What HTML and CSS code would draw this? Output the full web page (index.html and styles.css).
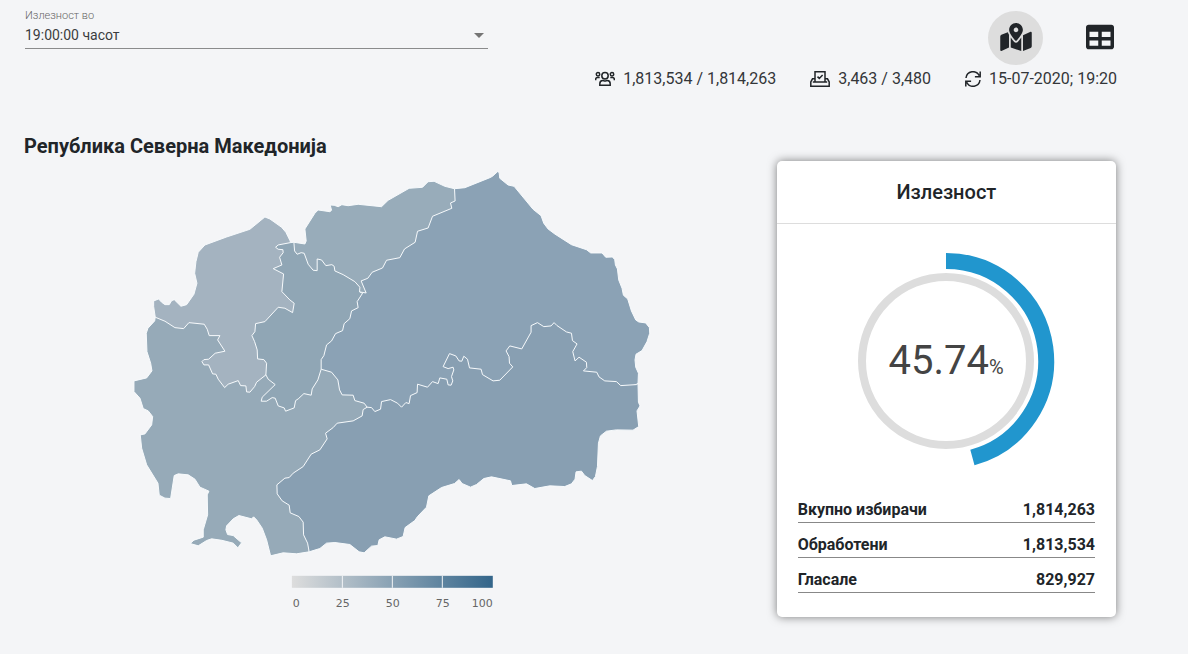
FILE: index.html
```html
<!DOCTYPE html>
<html lang="mk">
<head>
  <meta charset="UTF-8">
  <meta name="viewport" content="width=device-width, initial-scale=1.0">
  <title>Излезност</title>
  <link rel="stylesheet" href="styles.css">
</head>
<body>

  <div class="container">
    <header class="topbar">
      <div class="field">
        <label for="turnoutTime">Излезност во</label>
        <div class="select-box">
          <select id="turnoutTime">
            <option>19:00:00 часот</option>
          </select>
          <span class="arrow"></span>
        </div>
      </div>

      <div class="summary">
        <div class="views">
          <button type="button" class="view-button active" aria-label="Мапа">
            <svg width="32" height="28" viewBox="0 0 576 512"><path d="M288 0c-69.59 0-126 56.41-126 126 0 56.26 82.35 158.8 113.9 196.02 6.39 7.54 17.82 7.54 24.2 0C331.65 284.8 414 182.26 414 126 414 56.41 357.59 0 288 0zm0 168c-23.2 0-42-18.8-42-42s18.8-42 42-42 42 18.8 42 42-18.8 42-42 42zM20.12 215.95A32.006 32.006 0 0 0 0 245.66v250.32c0 11.32 11.43 19.06 21.94 14.86L160 448V214.92c-8.84-15.98-16.07-31.54-21.25-46.42L20.12 215.95zM288 359.67c-14.07 0-27.38-6.18-36.51-16.96-19.66-23.2-40.57-49.62-59.49-76.72v182l192 64V266c-18.92 27.09-39.82 53.52-59.49 76.72-9.13 10.77-22.44 16.95-36.51 16.95zm266.06-198.51L416 224v288l139.88-55.95A31.996 31.996 0 0 0 576 426.34V176.02c0-11.32-11.43-19.06-21.94-14.86z"/></svg>
          </button>
          <button type="button" class="view-button" aria-label="Табела">
            <svg width="28" height="28" viewBox="0 0 512 512"><path d="M464 32H48C21.49 32 0 53.49 0 80v352c0 26.51 21.49 48 48 48h416c26.51 0 48-21.49 48-48V80c0-26.51-21.49-48-48-48zM224 416H64v-96h160v96zm0-160H64v-96h160v96zm224 160H288v-96h160v96zm0-160H288v-96h160v96z"/></svg>
          </button>
        </div>
        <div class="stats">
          <span class="stat">
            <svg class="line-icon" width="20" height="16" viewBox="0 0 20 16">
              <circle cx="10" cy="4.7" r="3.2"/>
              <circle cx="3" cy="3.2" r="1.7"/>
              <circle cx="17" cy="3.2" r="1.7"/>
              <path d="M4.8 14.3v-1.5c0-2 1.3-3.3 3-3.3.8 0 1.2.4 2.2.4s1.4-.4 2.2-.4c1.7 0 3 1.3 3 3.3v1.5zM.7 9.3V8.2c0-1 .8-1.7 1.8-1.7h2.2M19.3 9.3V8.2c0-1-.8-1.7-1.8-1.7h-2.2"/>
            </svg>
            1,813,534 / 1,814,263
          </span>
          <span class="stat">
            <svg class="line-icon" width="20" height="16" viewBox="0 0 20 16">
              <path d="M5 11V.8h10V11M2.8 11h14.4M5 7.8H2.5L.8 11v4.2h18.4V11l-1.7-3.2H15M7.5 5.6l1.8 1.8 3.3-3.5"/>
            </svg>
            3,463 / 3,480
          </span>
          <span class="stat">
            <svg class="line-icon" width="16" height="16" viewBox="0 0 16 16">
              <path d="M1 7A7 7 0 0 1 14.3 4.8M15 9A7 7 0 0 1 1.7 11.2M15.2.5v5.3H9.9M.8 15.5v-5.3h5.3"/>
            </svg>
            15-07-2020; 19:20
          </span>
        </div>
      </div>
    </header>

    <main class="content">
      <section class="map-panel">
        <h1>Република Северна Македонија</h1>
        <svg class="map" viewBox="24 168 736 446" role="img" aria-label="Мапа на излезност">
          <defs>
            <linearGradient id="scale">
              <stop offset="0" stop-color="#dddddd"/>
              <stop offset="1" stop-color="#33658a"/>
            </linearGradient>
          </defs>

          <!-- regions overlap on purpose, every shared border is drawn by the later one -->
          <g class="regions">
            <path fill="#8ba2b5" d="M454.7 188.7L465 187.7 490 177.7 492.7 176.3 497.7 171.7 499.3 172.3 500 178.3 508.3 185 514.3 186.3 533.3 209.3 541.3 215.7 544 223.3 548.3 229 555 234 571.7 244.7 586.7 249.7 591 253 602.3 253 606 257.3 612.7 257 615 259.7 615.7 265 617.7 269 619 280 622.3 288.3 623.7 295.3 628 299 631.7 311 636 320 639 322 646 323 649.7 327.7 650 333.3 647.3 341.7 642.3 350.7 636.3 354.3 635.3 360 636 367.3 638.7 373.3 638.3 383.7 600 400 450 420 370 420 330 400 305 360 335 300 355 290 375 262 410 225 445 195Z"/>
            <path fill="#98acba" d="M294 242.3L305 244 306.3 241 305 229 315 213.3 318.3 210 330 211.7 331.7 210.3 330.3 205 334.3 205.3 338.3 206.7 342 204.7 348.3 205.7 358.3 204.3 381.7 206.7 388.3 200.3 409.3 188.3 422.7 187.3 428.3 181.7 434.3 181.3 445 186.3 454.7 188.7 455.3 201 450.7 203 452 208.3 432.7 216.3 428.3 228 417.7 231.3 415.3 242.3 404.7 249 400 257.7 386.7 260.3 382.7 268 372.3 272.3 368 278.3 361.3 281 366.3 293 359.7 292 330 290 300 280 290 255Z"/>
            <path fill="#96aab8" d="M309.3 552L296.7 554 283.3 553 270.7 556 266.7 540 262.3 528.3 256.7 520 253.7 517 251.7 519 239 515.7 233.3 519 226.7 526 226 530 227.7 534.7 233.3 535.7 241.7 543 238 548 233.3 543.3 222 540.5 211.7 539 206.7 540.7 198.3 546 190.3 543.7 194 540.3 203.3 537.3 203.3 530 207.7 515 207.3 495 209 491.3 200 487.3 195 479.3 188.3 475 178.3 474 174.3 475.7 170.7 498.7 165 498.3 159.3 495.3 158 483.3 146.7 465 141.7 448.3 140.3 435 145 434 151.7 425 152.7 416.7 148.3 411 143.3 408.7 140 398.3 134 391.7 134 381 146.7 378 152 371 150.7 363.3 147 351.7 146.3 333.3 148 328.3 154.7 321 155.3 317.3 200 310 240 340 300 375 321.3 369.3 331.7 372.3 338 380 339.7 390 342.3 395 353.3 395.3 355 400.7 364.3 403.3 367.3 407.3 380 420 330 470 310 530Z"/>
            <path fill="#a4b3c0" d="M155.3 317.3L153.7 306.7 153.7 301 158.7 299 161.7 302.3 165 304.7 169.3 304.7 171.7 300.7 174.3 299.7 181 306.3 186.7 304.7 194 294.3 197 283.3 194.7 273.3 196 261.7 198.3 252.3 205 245 226.7 237 250 229.3 265 217 270 219 281.7 227.3 286 232.3 290.3 241 300 300 275 360 266 375 256.7 382.3 254.7 386.7 250 392.3 246.7 392 246 386 240.7 385.7 238.3 380.7 228.3 384.3 224.7 387.7 218.3 379.3 216 374.3 212.7 374 208.7 365 204 365 202 361.7 204 359.7 208.7 359.3 215.3 353.3 225 351.3 217.7 340 220 335.7 209.3 335.7 207.3 329.3 204.3 324.3 189 322.7 183.7 328.7 175 327.7 165 321.3Z"/>
            <path fill="#90a6b5" d="M290.3 242.7L278.3 245 275.7 247.3 278.3 249.3 283 249.7 283.3 252.7 279.7 257.3 282 265 273.3 268.7 283.7 274 282 291.7 290 300 294.3 303.3 292.7 312.7 285 308.3 278.3 307.3 265 321.7 255.7 323.7 255 331.7 252 335.7 254.7 341.7 257.3 350 257.7 359 264 359.7 266.7 363.3 266 375 268.3 379.3 275.3 384.7 262.3 397.3 261.3 401.3 266.7 401.3 272.3 397.7 275.3 398.3 278.3 406 284.3 408 285.7 411.3 294.3 408 295.7 400.7 298.3 399 304 393.7 311.3 395.3 312.3 389 318 380 321.3 369.3 321.3 359.7 324 355.7 326.7 345 331.7 341 335.7 333.7 342.7 330.7 344.3 323.7 350 318.7 351.7 311 358.3 307.7 357.3 301.7 362.7 293.3 359.7 292 360 287.3 355 281.7 343.3 274.7 335 271 334.3 266.3 332 264.7 326 265.7 321.7 260 317.3 259 317.3 270.7 313.3 270.3 308.3 264.3 304.3 253.3 301.3 252.7 297.3 254.3 294.7 251 294 242.3Z"/>
            <path fill="#889fb2" d="M309.3 552L320 548.7 326.7 543.3 335 542.7 350 544.7 359.3 552 364.3 553 371.7 546.3 378 545.7 379.3 540 385 537 396.7 539.3 403.3 536.7 405.3 527.7 415 520.7 417.7 516.7 426.7 507.3 429 496 441.7 487.7 454.7 483.7 459.3 479.7 462.3 483.7 470.7 487.3 476.7 484.7 484 478.7 491.7 477 510.7 481 512 485.7 526.7 484 535 488.7 550 486 565 486.7 571.7 484 575.3 479.3 576.3 472 581.7 471.3 585 475.7 592.7 480.7 595.7 476.7 597.7 466.7 598.7 443.3 600.7 436 606.7 431.3 616.7 430 633.3 430.3 639 426.7 637.3 411 640.3 406 638.7 402.3 638.3 383.7 636.7 384.7 621 385.7 616.7 381.7 605 381 599.3 377 597 372.3 583.7 371 587 367.7 586.7 362.3 579.3 357.3 575.3 361 573 351.7 577.3 344 572.7 340.7 571.7 333.3 566.7 332 557.3 325.7 554.3 322.7 551.3 326 544 326.7 537.7 322.7 531.3 325.7 531.3 332.3 522 349 510 346 506.3 351 509.3 356.7 509.7 363.3 513 367 500 380.3 493.3 381 482.7 374.7 481.3 369.3 469.7 368 467.7 359.3 464 356.3 462 361.3 459.3 361 456 356 449.7 353.7 443.3 366.7 448.3 368.7 453.3 367.3 454 370 451.7 376.7 453 381 451.3 385.3 448.3 385 447 379.3 440 378 438.3 383.7 432.7 381.7 427.7 387.3 417.7 384.3 417.3 392.7 410.7 395.7 409.3 403.7 406 402.7 401.7 407.3 397.7 403.3 390.7 399.7 381.7 401.7 380.7 409.3 375 411.7 371.7 407.7 367.3 407.3 363.3 409.7 362.3 416 353.3 421 337.3 423.3 333.3 427.7 325.7 433.3 327.3 439 320 450 311.3 454.3 303.3 466.7 293.3 473.3 289.3 477.7 285 478.3 277 485 277.3 494 282.3 501 289.3 505.3 290.3 513 299 516.7 303.3 522.3 303.7 535 307.7 543.3Z"/>
          </g>

          <rect x="292" y="576" width="201" height="12" fill="url(#scale)"/>
          <path class="ticks" d="M342.5 576v12M392.5 576v12M442.5 576v12"/>
          <g class="scale-labels">
            <text x="293" y="607">0</text>
            <text x="343" y="607" text-anchor="middle">25</text>
            <text x="393" y="607" text-anchor="middle">50</text>
            <text x="443" y="607" text-anchor="middle">75</text>
            <text x="493" y="607" text-anchor="end">100</text>
          </g>
        </svg>
      </section>

      <section class="card">
        <h2>Излезност</h2>
        <svg class="gauge" width="220" height="220" viewBox="-110 -110 220 220">
          <circle class="ring" r="84"/>
          <path class="progress" d="M0 -100A100 100 0 0 1 26.4 96.5"/>
          <text x="0" y="13" text-anchor="middle">45.74<tspan class="percent">%</tspan></text>
        </svg>
        <table>
          <tr>
            <th scope="row">Вкупно избирачи</th>
            <td>1,814,263</td>
          </tr>
          <tr>
            <th scope="row">Обработени</th>
            <td>1,813,534</td>
          </tr>
          <tr>
            <th scope="row">Гласале</th>
            <td>829,927</td>
          </tr>
        </table>
      </section>
    </main>
  </div>

</body>
</html>
```
FILE: styles.css
```css
body {
  margin: 0;
  font-family: Roboto, sans-serif;
  font-size: 16px;
  color: #212529;
  background-color: #f4f5f7;
}
.container {
  padding: 8px 71px 16px 24px;
}
.topbar {
  display: flex;
  justify-content: space-between;
  align-items: flex-start;
}
.field {
  width: 42.4%;
  margin-left: 1px;
}
.field label {
  display: block;
  font-size: 11px;
  font-weight: 300;
  line-height: 15px;
  color: #666666;
}
.select-box {
  position: relative;
  border-bottom: 1px solid #8a8b8c;
}
.select-box select {
  display: block;
  width: 100%;
  height: 25px;
  padding: 0 0 2px;
  border: none;
  appearance: none;
  background: none;
  font-family: inherit;
  font-size: 14px;
  color: #3a3c3e;
}
.arrow {
  position: absolute;
  top: 10px;
  right: 4px;
  border: 5px solid transparent;
  border-top-color: #757575;
  border-bottom: none;
  pointer-events: none;
}
.views {
  display: flex;
  justify-content: flex-end;
  gap: 29px;
  padding-top: 3px;
  margin-right: -10px;
}
.view-button {
  display: flex;
  align-items: center;
  justify-content: center;
  width: 55px;
  height: 54px;
  padding: 0 0 2px;
  border: none;
  border-radius: 50%;
  background: none;
  fill: #212529;
  cursor: pointer;
}
.view-button.active {
  background-color: #dddddd;
}
.stats {
  display: flex;
  gap: 34px;
  line-height: 28px;
  color: #333639;
}
.stat {
  display: flex;
  align-items: center;
  gap: 8px;
}
.line-icon {
  fill: none;
  stroke: #212529;
  stroke-width: 1.5;
}
.content {
  display: grid;
  grid-template-columns: 735fr 339fr;
  gap: 17px;
  align-items: start;
  padding: 41px 1px 0 0;
}
h1 {
  margin: 0;
  font-size: 20px;
  line-height: 24px;
}
.map {
  display: block;
  width: 100%;
  margin-top: 10px;
}
.regions {
  stroke: #f7fafc;
  stroke-width: 1;
  stroke-linejoin: round;
}
.ticks {
  stroke: #f4f5f7;
}
.scale-labels {
  font-family: "DejaVu Sans", sans-serif;
  font-size: 11px;
  fill: #666666;
}
.card {
  margin-top: 27px;
  border-radius: 5px;
  background-color: #ffffff;
  box-shadow: 0 0 10px rgba(0, 0, 0, 0.5);
}
.card h2 {
  margin: 0;
  font-size: 20px;
  font-weight: 500;
  line-height: 62px;
  text-align: center;
  border-bottom: 1px solid #dddddd;
}
.gauge {
  display: block;
  margin: 27px auto 17px;
}
.ring {
  fill: none;
  stroke: #dddddd;
  stroke-width: 8;
}
.progress {
  fill: none;
  stroke: #2196ce;
  stroke-width: 16;
}
.gauge text {
  font-size: 40px;
  fill: #444444;
}
.gauge .percent {
  font-size: 20px;
}
.card table {
  width: calc(100% - 42px);
  margin: 0 21px;
  border-collapse: collapse;
}
.card tr {
  border-bottom: 1px solid #888888;
}
.card th, .card td {
  padding: 12px 0 3px;
  line-height: 19px;
  font-weight: bold;
  text-align: left;
}
.card td {
  text-align: right;
}
.card::after {
  content: "";
  display: block;
  height: 24px;
}
```
